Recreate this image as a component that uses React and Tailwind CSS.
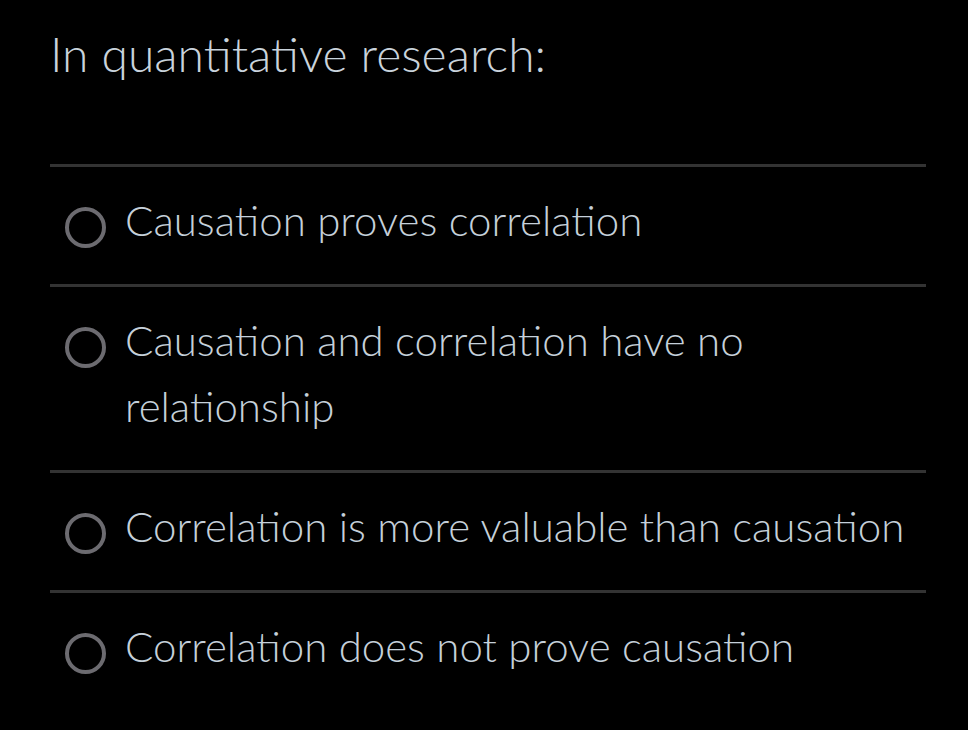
export default function App() {
  const options = [
    "Causation proves correlation",
    "Causation and correlation have no relationship",
    "Correlation is more valuable than causation",
    "Correlation does not prove causation",
  ];
  return (
    <div
      className="w-[968px] h-[730px] bg-black overflow-hidden pl-[50px] pr-[42px] pt-[25px]"
      style={{ fontFamily: "Lato, 'Open Sans', sans-serif" }}
    >
      <div className="text-[48px] leading-[58px] font-light text-[#c9d3dc]">
        In quantitative research:
      </div>
      <div className="mt-[81px]">
        {options.map((o) => (
          <div key={o} className="border-t-[3px] border-[#333333]">
            <label className="flex items-start pt-[20px] pb-[31px] cursor-pointer">
              <span className="mt-[20px] ml-[15px] w-[41px] h-[41px] shrink-0 rounded-full border-[4px] border-[#6c6b70]" />
              <span className="ml-[19px] text-[42px] leading-[66px] font-light text-[#c5d0da]">
                {o}
              </span>
            </label>
          </div>
        ))}
      </div>
    </div>
  );
}
